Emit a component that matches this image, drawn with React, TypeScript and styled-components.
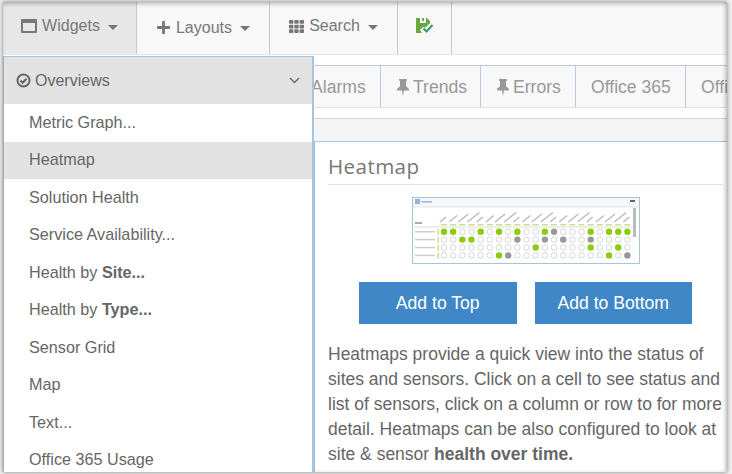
import React from "react";
import styled, { createGlobalStyle } from "styled-components";
import { FaPlus, FaTh } from "react-icons/fa";

const GlobalStyle = createGlobalStyle`
  html, body {
    margin: 0;
    padding: 0;
    background: #f0f0f0;
  }
  body {
    font-family: "Liberation Sans", Arial, sans-serif;
  }
`;

const Page = styled.div`
  position: relative;
  width: 732px;
  height: 474px;
  overflow: hidden;
  background: #f0f0f0;
  box-sizing: border-box;
  padding: 2px 5px 2px 3px;
`;

const Frame = styled.div`
  position: relative;
  height: 100%;
  background: #fff;
  overflow: hidden;
  box-shadow: 0 0 4px rgba(0, 0, 0, 0.5);
  display: flex;
  flex-direction: column;

  &::after {
    content: "";
    position: absolute;
    inset: 0;
    pointer-events: none;
    box-shadow: inset 0 3px 4px -1px rgba(0, 0, 0, 0.22), inset -3px 0 4px -1px rgba(0, 0, 0, 0.18);
  }
`;

const Navbar = styled.nav`
  display: flex;
  height: 53px;
  flex: none;
  background: #f8f8f8;
  border-bottom: 1px solid #e7e7e7;
  box-sizing: border-box;
`;

const NavItem = styled.div<{ $w: number; $active?: boolean; $low?: boolean }>`
  width: ${(p) => p.$w}px;
  flex: none;
  box-sizing: border-box;
  display: flex;
  align-items: center;
  justify-content: center;
  gap: 5px;
  padding-bottom: ${(p) => (p.$low ? "1px" : "4px")};
  font-size: 16px;
  color: #777;
  background: ${(p) => (p.$active ? "#e7e7e7" : "transparent")};
  border-right: 1px solid #c8c8c8;
`;

const Caret = styled.span`
  width: 0;
  height: 0;
  margin-left: 3px;
  margin-top: 2px;
  border-left: 5px solid transparent;
  border-right: 5px solid transparent;
  border-top: 5px solid #777;
`;

const TabsRow = styled.div`
  display: flex;
  flex: none;
  height: 43px;
  margin-top: 10px;
  padding-left: 293px;
  background: #f8f8f8;
  border-top: 1px solid #b9c9dc;
  border-bottom: 1px solid #e0e0e0;
  box-sizing: border-box;
  overflow: hidden;
`;

const Tab = styled.div<{ $w: number }>`
  width: ${(p) => p.$w}px;
  flex: none;
  box-sizing: border-box;
  display: flex;
  align-items: center;
  gap: 3px;
  padding: 2px 0 0 15px;
  font-size: 17.6px;
  color: #999;
  white-space: nowrap;
  border-right: 1px solid #b9c9dc;
`;

const GrayStrip = styled.div`
  flex: 1;
  min-height: 0;
  margin-top: 10px;
  padding: 22px 0 0 311px;
  background: #f5f5f5;
  border-top: 1px solid #d4d4d4;
  display: flex;
`;

const Panel = styled.section`
  flex: 1;
  padding: 10px 4px 0 13px;
  background: #fff;
  border-top: 1px solid #a5c4e0;
  border-left: 1px solid #a5c4e0;
`;

const Heading = styled.h2`
  margin: 0;
  padding-bottom: 4px;
  border-bottom: 1px solid #e5e5e5;
  font-family: "Open Sans", sans-serif;
  font-weight: 400;
  font-size: 20.6px;
  line-height: 28px;
  letter-spacing: 0.4px;
  color: #777;
`;

const ThumbRow = styled.div`
  display: flex;
  justify-content: center;
  margin-top: 12px;
`;

const Thumb = styled.svg`
  display: block;
  width: 228px;
  height: 67px;
`;

const Actions = styled.div`
  display: flex;
  justify-content: center;
  gap: 18px;
  margin-top: 18px;
`;

const ActionButton = styled.button`
  width: 157.5px;
  height: 42px;
  padding: 0;
  border: 0;
  background: #3f87c7;
  color: #fff;
  font-family: "Liberation Sans", Arial, sans-serif;
  font-size: 17.6px;
`;

const Copy = styled.p`
  margin: 18px 0 0;
  font-size: 17.5px;
  line-height: 25px;
  color: #666;
`;

const Menu = styled.div`
  position: absolute;
  left: 0;
  top: 54px;
  width: 311px;
  height: 420px;
  box-sizing: border-box;
  background: #fff;
  border: 1px solid #a5c4e0;
  border-right-width: 2px;
  border-left-color: #a3abb8;
  border-bottom: 0;
  z-index: 2;
`;

const MenuHeader = styled.div`
  height: 47px;
  box-sizing: border-box;
  display: flex;
  align-items: center;
  gap: 4px;
  padding: 0 12px;
  background: #e2e2e2;
  color: #666;
  font-size: 16px;
`;

const HeaderLabel = styled.span`
  flex: 1;
`;

const MenuItem = styled.div<{ $active?: boolean }>`
  height: 37.5px;
  box-sizing: border-box;
  display: flex;
  align-items: center;
  padding: 0 0 0.6px 25px;
  font-size: 16.2px;
  color: #666;
  white-space: pre;
  background: ${(p) => (p.$active ? "#e2e2e2" : "transparent")};
`;

const WindowIcon = () => (
  <svg width="16" height="14" viewBox="0 0 16 14">
    <path fill="#777" fillRule="evenodd" d="M1 0h14a1 1 0 0 1 1 1v12a1 1 0 0 1-1 1H1a1 1 0 0 1-1-1V1a1 1 0 0 1 1-1zm1 4v8h12V4z" />
  </svg>
);

const SaveIcon = () => (
  <svg width="18" height="16" viewBox="0 0 18 16">
    <path fill="#6aa842" fillRule="evenodd" d="M0 0h11l3 3v2l-5 5-2-1-3 3 2 3H0zM4 0v5h6V0H8v3H6V0z" />
    <path fill="none" stroke="#fff" strokeWidth="4" d="M7.500 10.500l3 3 6-6.500" />
    <path fill="none" stroke="#2f9c6a" strokeWidth="2.200" d="M7.500 10.500l3 3 6-6.500" />
  </svg>
);

const PinIcon = () => (
  <svg width="14" height="17" viewBox="0 0 14 17">
    <path fill="#999" d="M3 0h8v1.500l-1 .8v5L13 10v1.600H8L7 17l-1-5.400H1V10l3-2.700v-5L3 1.500z" />
  </svg>
);

const CheckCircleIcon = () => (
  <svg width="15" height="15" viewBox="0 0 15 15">
    <circle cx="7.500" cy="7.500" r="6" fill="none" stroke="#666" strokeWidth="2" />
    <path fill="none" stroke="#666" strokeWidth="2" d="M4.500 7.500l2.200 2.200 3.800-4" />
  </svg>
);

const ChevronIcon = () => (
  <svg width="11" height="7" viewBox="0 0 11 7">
    <path fill="none" stroke="#666" strokeWidth="1.300" d="M1 1l4.500 4.500L10 1" />
  </svg>
);

const rows = [
  "gg..g.g.g..gk...g.ggg",
  "..gg....k..k.k..k....",
  "..........g.....g..g.",
  "......gk..........g.k",
];

const cellFill: Record<string, string> = { g: "#8ccc10", k: "#999", ".": "#fff" };

const HeatmapThumb = () => (
  <Thumb viewBox="0 0 228 67">
    <defs>
      <filter id="soft">
        <feGaussianBlur stdDeviation="0.55" />
      </filter>
    </defs>
    <rect x="0.5" y="0.5" width="227" height="66" fill="#fff" stroke="#a5c4e0" />
    <g filter="url(#soft)">
      <rect x="1" y="1" width="226" height="9" fill="#f4f6f8" />
      <rect x="3" y="2" width="5" height="5" fill="#8fb4d8" />
      <rect x="9" y="4" width="11" height="1.500" fill="#9bb8d6" />
      <rect x="218" y="3" width="5" height="2" fill="#666" />
      <line x1="1" y1="10" x2="227" y2="10" stroke="#e4e4e4" />
      <rect x="3" y="25" width="7" height="2" fill="#aaa" />
      {rows[0].split("").map((_, i) => (
        <React.Fragment key={i}>
          <line
            x1={28 + i * 9.17}
            y1={25}
            x2={28 + i * 9.17 + 6 + (i % 4) * 2}
            y2={25 - 5 - (i % 4) * 1.500}
            stroke="#bbb"
            strokeWidth="1.500"
          />
          <rect x={29 + i * 9.17} y={27} width="6" height="1.500" fill="#c4e48c" />
        </React.Fragment>
      ))}
      <line x1="3" y1="30" x2="222" y2="30" stroke="#ddd" />
      {rows.map((row, r) => (
        <React.Fragment key={r}>
          <rect x="3" y={34 + r * 7.9} width="20" height="1.500" fill="#ccc" />
          <rect x="25.500" y={32 + r * 7.9} width="1.500" height="6" fill="#c4e48c" />
          {row.split("").map((cell, c) => (
            <circle
              key={c}
              cx={32 + c * 9.17}
              cy={34.7 + r * 7.9}
              r={cell === "." ? 2.800 : 3.200}
              fill={cellFill[cell]}
              stroke={cell === "." ? "#ccc" : "none"}
              strokeWidth="0.800"
            />
          ))}
        </React.Fragment>
      ))}
      <rect x="221" y="11" width="3" height="29" fill="#bbb" />
    </g>
  </Thumb>
);

const menuItems: React.ReactNode[] = [
  "Metric Graph...",
  "Heatmap",
  "Solution Health",
  "Service Availability...",
  <>Health by <b>Site...</b></>,
  <>Health by <b>Type...</b></>,
  "Sensor Grid",
  "Map",
  "Text...",
  "Office 365 Usage",
];

const App = () => (
  <>
    <GlobalStyle />
    <Page>
      <Frame>
        <Navbar>
          <NavItem $w={134} $active>
            <WindowIcon />
            Widgets
            <Caret />
          </NavItem>
          <NavItem $w={133} $low>
            <FaPlus size={15} />
            Layouts
            <Caret />
          </NavItem>
          <NavItem $w={128}>
            <FaTh size={15} />
            Search
            <Caret />
          </NavItem>
          <NavItem $w={54}>
            <SaveIcon />
          </NavItem>
        </Navbar>
        <TabsRow>
          <Tab $w={85}>Alarms</Tab>
          <Tab $w={100}>
            <PinIcon />
            Trends
          </Tab>
          <Tab $w={95}>
            <PinIcon />
            Errors
          </Tab>
          <Tab $w={110}>Office 365</Tab>
          <Tab $w={110}>Office 365</Tab>
        </TabsRow>
        <GrayStrip>
          <Panel>
            <Heading>Heatmap</Heading>
            <ThumbRow>
              <HeatmapThumb />
            </ThumbRow>
            <Actions>
              <ActionButton>Add to Top</ActionButton>
              <ActionButton>Add to Bottom</ActionButton>
            </Actions>
            <Copy>
              Heatmaps provide a quick view into the status of sites and sensors. Click on a cell to see status and
              list of sensors, click on a column or row to for more detail. Heatmaps can be also configured to look at
              site &amp; sensor <b>health over time.</b>
            </Copy>
          </Panel>
        </GrayStrip>
        <Menu>
          <MenuHeader>
            <CheckCircleIcon />
            <HeaderLabel>Overviews</HeaderLabel>
            <ChevronIcon />
          </MenuHeader>
          {menuItems.map((item, i) => (
            <MenuItem key={i} $active={i === 1}>
              {item}
            </MenuItem>
          ))}
        </Menu>
      </Frame>
    </Page>
  </>
);

export default App;
